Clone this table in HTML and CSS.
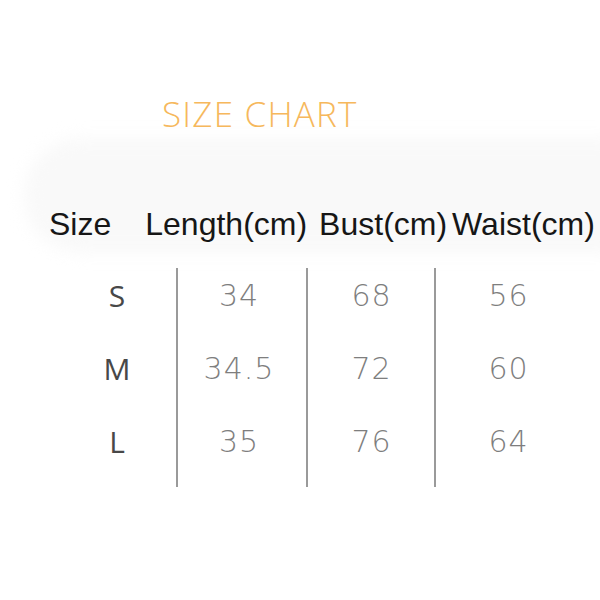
FILE: index.html
```html
<!DOCTYPE html>
<html>
<head>
<meta charset="utf-8">
<link rel="stylesheet" href="styles.css">
</head>
<body>
<div class="page">
  <div class="glow"></div>
  <h1 class="title">SIZE CHART</h1>
  <div class="head">
    <span class="h-size">Size</span>
    <span class="h-len">Length(cm)</span>
    <span class="h-bust">Bust(cm)</span>
    <span class="h-waist">Waist(cm)</span>
  </div>
  <div class="chart">
    <div class="cell size">S</div>
    <div class="cell val c2">34</div>
    <div class="cell val c3">68</div>
    <div class="cell val c4">56</div>

    <div class="cell size">M</div>
    <div class="cell val c2">34.5</div>
    <div class="cell val c3">72</div>
    <div class="cell val c4">60</div>

    <div class="cell size last">L</div>
    <div class="cell val c2 last">35</div>
    <div class="cell val c3 last">76</div>
    <div class="cell val c4 last">64</div>
  </div>
</div>
</body>
</html>
```

FILE: styles.css
```css
html, body {
  margin: 0;
  padding: 0;
  background: #ffffff;
}

.page {
  position: relative;
  width: 600px;
  height: 600px;
  overflow: hidden;
  background: #ffffff;
}

.glow {
  position: absolute;
  left: 24px;
  top: 138px;
  width: 640px;
  height: 115px;
  border-radius: 70px;
  background: #f9f9f9;
  filter: blur(8px);
  z-index: 0;
}

.title {
  position: relative;
  z-index: 1;
  margin: 94px 0 0 0;
  padding-left: 162px;
  font-family: "Open Sans", sans-serif;
  font-weight: 300;
  font-size: 35px;
  line-height: 40px;
  letter-spacing: 1.2px;
  color: #f6b85c;
}

.head {
  position: relative;
  z-index: 1;
  display: flex;
  margin-top: 72px;
  padding-left: 49px;
  font-family: "Liberation Sans", Arial, sans-serif;
  font-size: 32px;
  line-height: 36px;
  color: #161616;
  white-space: nowrap;
}

.h-len { margin-left: 34px; }
.h-bust { margin-left: 12px; }
.h-waist { margin-left: 5px; }

.chart {
  position: relative;
  z-index: 1;
  display: grid;
  grid-template-columns: 118px 130px 128px 146px;
  grid-auto-rows: 73px;
  margin-top: 26px;
  margin-left: 58px;
  font-size: 30px;
  line-height: 55px;
}

.cell {
  text-align: center;
}

.size {
  font-family: "Open Sans", sans-serif;
  font-weight: 400;
  color: #484848;
}

.val {
  border-left: 2px solid #9a9a9a;
  font-family: "DejaVu Sans", sans-serif;
  font-weight: 200;
  color: #7e7e7e;
  letter-spacing: 1px;
  padding-left: 1px;
}

.c2 { padding-right: 7px; }
```
